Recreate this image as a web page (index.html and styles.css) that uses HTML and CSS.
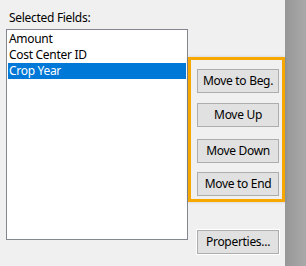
FILE: index.html
```html
<!DOCTYPE html>
<html lang="en">
<head>
    <meta charset="UTF-8">
    <title>Selected Fields</title>
    <link rel="stylesheet" href="styles.css">
</head>
<body>

    <div class="panel">
        <div class="fields">
            <div class="fields-label">Selected Fields:</div>
            <ul class="listbox">
                <li>Amount</li>
                <li>Cost Center ID</li>
                <li class="selected">Crop Year</li>
            </ul>
        </div>

        <div class="side">
            <div class="order-group">
                <button class="btn">Move to Beg.</button>
                <button class="btn btn-up">Move Up</button>
                <button class="btn btn-down">Move Down</button>
                <button class="btn btn-end">Move to End</button>
            </div>
            <button class="btn btn-props">Properties...</button>
        </div>
    </div>

    <div class="edge"></div>

</body>
</html>
```

FILE: styles.css
```css
body {
    margin: 0;
    width: 306px;
    height: 266px;
    display: flex;
    overflow: hidden;
    font-family: "Noto Sans", "Open Sans", sans-serif;
    font-size: 12px;
    letter-spacing: -0.3px;
    color: #000;
}

.panel {
    width: 285px;
    background-color: #f0f0f0;
    display: flex;
    padding: 10px 0 0 6px;
    box-sizing: border-box;
}

.fields {
    width: 184px;
}

.fields-label {
    height: 16px;
    line-height: 16px;
    padding-left: 3px;
}

.listbox {
    list-style: none;
    margin: 3px 0 0 0;
    padding: 1px;
    height: 211px;
    box-sizing: border-box;
    border: 1px solid #828790;
    background-color: #fff;
}

.listbox li {
    height: 16px;
    line-height: 16px;
    padding-left: 1px;
    white-space: nowrap;
}

.listbox .selected {
    background-color: #0078d7;
    color: #fff;
}

.side {
    width: 98px;
    padding-top: 47px;
    display: flex;
    flex-direction: column;
}

.order-group {
    position: relative;
    z-index: 1;
    display: flex;
    flex-direction: column;
    border: 3px solid #f7a800;
    padding: 9px 0 3px 6px;
    box-shadow: 0 0 3px rgba(0, 0, 0, 0.15);
}

.btn {
    width: 82px;
    height: 24px;
    padding: 0;
    border: 1px solid #adadad;
    background-color: #e1e1e1;
    font-family: inherit;
    font-size: 12px;
    letter-spacing: -0.3px;
    color: #000;
    line-height: 20px;
}

.btn-up {
    margin-top: 10px;
}

.btn-down {
    margin-top: 12px;
}

.btn-end {
    margin-top: 9px;
}

.btn-props {
    margin: 28px 0 0 9px;
    box-shadow: 0 0 0 1px #fff;
}

.edge {
    flex: 1;
    background: linear-gradient(to right, #979797, #a9a9a9);
}
```
